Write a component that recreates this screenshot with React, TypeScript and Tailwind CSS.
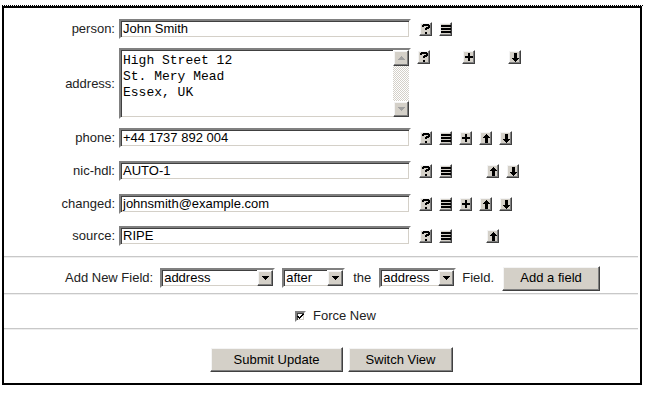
import React from "react";

const sans = "font-['Liberation_Sans',Arial,sans-serif]";
const sunken =
  "border-2 border-t-[#808080] border-l-[#808080] border-b-white border-r-white shadow-[inset_1px_1px_0_#404040,inset_-1px_-1px_0_#d4d0c8]";
const raised =
  "bg-[#d4d0c8] border border-t-white border-l-white border-b-[#404040] border-r-[#404040] shadow-[inset_-1px_-1px_0_#808080,inset_1px_1px_0_#f4f4f4]";

type Icon = { g: string; cls: string };

const rows: { label: string; value: string; icons: Icon[] }[] = [
  {
    label: "person:",
    value: "John Smith",
    icons: [
      { g: "?", cls: "ml-[8px]" },
      { g: "≡", cls: "ml-[7px]" },
    ],
  },
  {
    label: "phone:",
    value: "+44 1737 892 004",
    icons: [
      { g: "?", cls: "ml-[8px]" },
      { g: "≡", cls: "ml-[7px]" },
      { g: "+", cls: "ml-[7px]" },
      { g: "up", cls: "ml-[7px]" },
      { g: "down", cls: "ml-[7px]" },
    ],
  },
  {
    label: "nic-hdl:",
    value: "AUTO-1",
    icons: [
      { g: "?", cls: "ml-[8px]" },
      { g: "≡", cls: "ml-[7px]" },
      { g: "up", cls: "ml-[34px]" },
      { g: "down", cls: "ml-[7px]" },
    ],
  },
  {
    label: "changed:",
    value: "johnsmith@example.com",
    icons: [
      { g: "?", cls: "ml-[8px]" },
      { g: "≡", cls: "ml-[7px]" },
      { g: "+", cls: "ml-[7px]" },
      { g: "up", cls: "ml-[7px]" },
      { g: "down", cls: "ml-[7px]" },
    ],
  },
  {
    label: "source:",
    value: "RIPE",
    icons: [
      { g: "?", cls: "ml-[8px]" },
      { g: "≡", cls: "ml-[7px]" },
      { g: "up", cls: "ml-[34px]" },
    ],
  },
];

const rowGap = ["mt-[11px]", "mt-[9px]", "mt-[13px]", "mt-[13px]", "mt-[12px]"];

function Glyph({ g }: { g: string }) {
  if (g === "?")
    return (
      <svg width="8" height="10" viewBox="0 0 8 10" shapeRendering="crispEdges">
        <rect x="1" y="0" width="6" height="2" />
        <rect x="0" y="1" width="2" height="2" />
        <rect x="6" y="1" width="2" height="3" />
        <rect x="4" y="3" width="3" height="2" />
        <rect x="3" y="4" width="2" height="2" />
        <rect x="3" y="8" width="2" height="2" />
      </svg>
    );
  if (g === "≡")
    return (
      <svg width="10" height="9" viewBox="0 0 10 9" shapeRendering="crispEdges">
        <rect x="0" y="0" width="10" height="2" />
        <rect x="0" y="3" width="10" height="2" />
        <rect x="0" y="6" width="10" height="2" />
      </svg>
    );
  if (g === "+")
    return (
      <svg width="8" height="8" viewBox="0 0 8 8" shapeRendering="crispEdges">
        <rect x="3" y="0" width="2" height="8" />
        <rect x="0" y="3" width="8" height="2" />
      </svg>
    );
  if (g === "up")
    return (
      <svg width="8" height="9" viewBox="0 0 8 9" shapeRendering="crispEdges">
        <polygon points="4,0 8,4 5.5,4 5.5,9 2.5,9 2.5,4 0,4" />
      </svg>
    );
  return (
    <svg width="8" height="9" viewBox="0 0 8 9" shapeRendering="crispEdges">
      <polygon points="4,9 8,5 5.5,5 5.5,0 2.5,0 2.5,5 0,5" />
    </svg>
  );
}

function IconBtn({ g, cls }: Icon) {
  return (
    <span className={`${cls} ${raised} flex h-[14px] w-[13px] shrink-0 items-center justify-center`}>
      <Glyph g={g} />
    </span>
  );
}

function Label({ text }: { text: string }) {
  return <div className="w-[115px] shrink-0 pr-[4px] text-right text-[13px] text-[#222]">{text}</div>;
}

function Field({ value }: { value: string }) {
  return (
    <div className={`${sunken} flex h-[20px] w-[292px] items-center bg-white pl-[2px] text-[13px] text-black`}>
      {value}
    </div>
  );
}

function Row({ label, value, icons, gap }: { label: string; value: string; icons: Icon[]; gap: string }) {
  return (
    <div className={`${gap} flex items-center`}>
      <Label text={label} />
      <Field value={value} />
      {icons.map((ic, i) => (
        <IconBtn key={i} {...ic} />
      ))}
    </div>
  );
}

function Arrow({ down, color }: { down?: boolean; color: string }) {
  return (
    <svg width="7" height="4" viewBox="0 0 7 4" shapeRendering="crispEdges" fill={color}>
      {down ? <polygon points="0,0 7,0 3.5,4" /> : <polygon points="3.5,0 7,4 0,4" />}
    </svg>
  );
}

function AddressBox() {
  return (
    <div className={`${sunken} flex h-[71px] w-[292px] bg-white`}>
      <div className="flex-1 pl-[2px] pt-[3px] font-['Liberation_Mono','Courier_New',monospace] text-[13px] leading-[16px] text-black">
        <div>High Street 12</div>
        <div>St. Mery Mead</div>
        <div>Essex, UK</div>
      </div>
      <div className="flex w-[16px] flex-col">
        <div className={`${raised} flex h-[16px] items-center justify-center`}>
          <Arrow color="#a0a0a0" />
        </div>
        <div className="flex-1 bg-[repeating-conic-gradient(#d4d0c8_0_25%,#ffffff_0_50%)] bg-[length:2px_2px]" />
        <div className={`${raised} flex h-[16px] items-center justify-center`}>
          <Arrow down color="#a0a0a0" />
        </div>
      </div>
    </div>
  );
}

function Select({ value, w }: { value: string; w: string }) {
  return (
    <div className={`${sunken} ${w} flex h-[20px] items-center bg-white`}>
      <span className="flex-1 pl-[2px] text-[13px] text-black">{value}</span>
      <span className={`${raised} flex h-[16px] w-[16px] items-center justify-center`}>
        <Arrow down color="#000" />
      </span>
    </div>
  );
}

function Hr() {
  return <div className="mr-[2px] h-[2px] border-t border-b border-t-[#c8c8c8] border-b-[#eeeeee]" />;
}

function Btn({ text, w }: { text: string; w: string }) {
  return (
    <button className={`${raised} ${w} flex h-[25px] items-center justify-center text-[13px] text-black`}>
      {text}
    </button>
  );
}

export default function App() {
  return (
    <div className={`${sans} h-[393px] w-[645px] bg-white pl-[2px] pt-[5px]`}>
      {/* dotted edge above the frame */}
      <div className="h-[1px] w-[642px] bg-[repeating-linear-gradient(to_right,#000_0_1px,transparent_1px_2px)]" />
      <div className="flex h-[379px] w-[640px] flex-col border-2 border-black">
        <Row {...rows[0]} gap={rowGap[0]} />

        {/* address */}
        <div className="mt-[9px] flex items-center">
          <Label text="address:" />
          <AddressBox />
          <div className="flex self-start pt-[2px]">
            <IconBtn g="?" cls="ml-[6px]" />
            <IconBtn g="+" cls="ml-[32px]" />
            <IconBtn g="down" cls="ml-[33px]" />
          </div>
        </div>

        {rows.slice(1).map((r, i) => (
          <Row key={r.label} {...r} gap={rowGap[i + 1]} />
        ))}

        <div className="mt-[10px]">
          <Hr />
        </div>

        {/* add new field */}
        <div className="flex h-[35px] items-center pl-[61px] pt-[5px] text-[13px] text-[#222]">
          <span>Add New Field:</span>
          <Select value="address" w="ml-[7px] w-[115px]" />
          <Select value="after" w="ml-[7px] w-[63px]" />
          <span className="ml-[8px]">the</span>
          <Select value="address" w="ml-[8px] w-[77px]" />
          <span className="ml-[6px]">Field.</span>
          <Btn text="Add a field" w="ml-[8px] w-[98px] h-[23px]" />
        </div>

        <Hr />

        {/* force new */}
        <div className="flex h-[33px] items-center pl-[291px] pt-[9px] text-[13px] text-[#222]">
          <span className={`${sunken} flex h-[11px] w-[11px] items-center justify-center bg-white`}>
            <svg width="7" height="7" viewBox="0 0 7 7" shapeRendering="crispEdges">
              <polyline points="0.5,3 2.5,5 6.5,1" fill="none" stroke="#000" strokeWidth="1.6" />
            </svg>
          </span>
          <span className="ml-[7px]">Force New</span>
        </div>

        <Hr />

        <div className="flex gap-[5px] pl-[206px] pt-[17px]">
          <Btn text="Submit Update" w="w-[133px]" />
          <Btn text="Switch View" w="w-[105px]" />
        </div>
      </div>
    </div>
  );
}
